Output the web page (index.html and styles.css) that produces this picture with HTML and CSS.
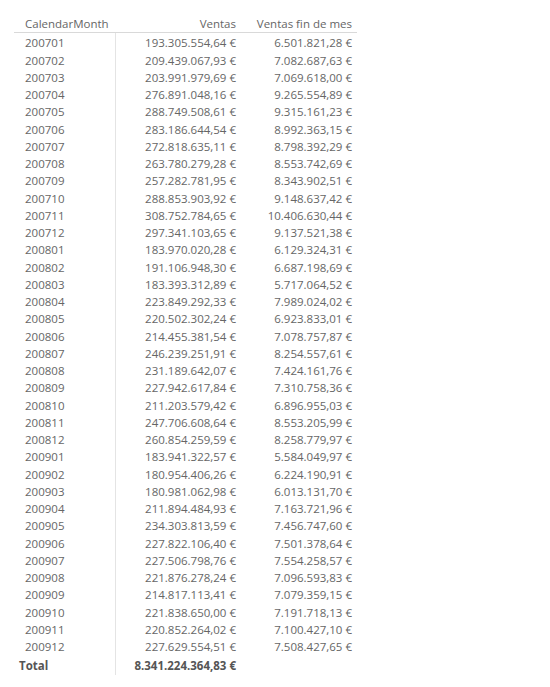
FILE: index.html
```html
<!DOCTYPE html>
<html lang="en">
<head>
    <meta charset="UTF-8">
    <title>Ventas por mes</title>
    <link rel="stylesheet" href="styles.css">
</head>
<body>
    <div class="visual">
        <table class="matrix">
            <colgroup>
                <col class="w-month">
                <col class="w-sales">
                <col class="w-eom">
            </colgroup>
            <thead>
                <tr>
                    <th class="col-month">CalendarMonth</th>
                    <th class="col-num">Ventas</th>
                    <th class="col-num">Ventas fin de mes</th>
                </tr>
            </thead>
            <tbody>
                <tr><td class="col-month">200701</td><td class="col-num">193.305.554,64 €</td><td class="col-num">6.501.821,28 €</td></tr>
                <tr><td class="col-month">200702</td><td class="col-num">209.439.067,93 €</td><td class="col-num">7.082.687,63 €</td></tr>
                <tr><td class="col-month">200703</td><td class="col-num">203.991.979,69 €</td><td class="col-num">7.069.618,00 €</td></tr>
                <tr><td class="col-month">200704</td><td class="col-num">276.891.048,16 €</td><td class="col-num">9.265.554,89 €</td></tr>
                <tr><td class="col-month">200705</td><td class="col-num">288.749.508,61 €</td><td class="col-num">9.315.161,23 €</td></tr>
                <tr><td class="col-month">200706</td><td class="col-num">283.186.644,54 €</td><td class="col-num">8.992.363,15 €</td></tr>
                <tr><td class="col-month">200707</td><td class="col-num">272.818.635,11 €</td><td class="col-num">8.798.392,29 €</td></tr>
                <tr><td class="col-month">200708</td><td class="col-num">263.780.279,28 €</td><td class="col-num">8.553.742,69 €</td></tr>
                <tr><td class="col-month">200709</td><td class="col-num">257.282.781,95 €</td><td class="col-num">8.343.902,51 €</td></tr>
                <tr><td class="col-month">200710</td><td class="col-num">288.853.903,92 €</td><td class="col-num">9.148.637,42 €</td></tr>
                <tr><td class="col-month">200711</td><td class="col-num">308.752.784,65 €</td><td class="col-num">10.406.630,44 €</td></tr>
                <tr><td class="col-month">200712</td><td class="col-num">297.341.103,65 €</td><td class="col-num">9.137.521,38 €</td></tr>
                <tr><td class="col-month">200801</td><td class="col-num">183.970.020,28 €</td><td class="col-num">6.129.324,31 €</td></tr>
                <tr><td class="col-month">200802</td><td class="col-num">191.106.948,30 €</td><td class="col-num">6.687.198,69 €</td></tr>
                <tr><td class="col-month">200803</td><td class="col-num">183.393.312,89 €</td><td class="col-num">5.717.064,52 €</td></tr>
                <tr><td class="col-month">200804</td><td class="col-num">223.849.292,33 €</td><td class="col-num">7.989.024,02 €</td></tr>
                <tr><td class="col-month">200805</td><td class="col-num">220.502.302,24 €</td><td class="col-num">6.923.833,01 €</td></tr>
                <tr><td class="col-month">200806</td><td class="col-num">214.455.381,54 €</td><td class="col-num">7.078.757,87 €</td></tr>
                <tr><td class="col-month">200807</td><td class="col-num">246.239.251,91 €</td><td class="col-num">8.254.557,61 €</td></tr>
                <tr><td class="col-month">200808</td><td class="col-num">231.189.642,07 €</td><td class="col-num">7.424.161,76 €</td></tr>
                <tr><td class="col-month">200809</td><td class="col-num">227.942.617,84 €</td><td class="col-num">7.310.758,36 €</td></tr>
                <tr><td class="col-month">200810</td><td class="col-num">211.203.579,42 €</td><td class="col-num">6.896.955,03 €</td></tr>
                <tr><td class="col-month">200811</td><td class="col-num">247.706.608,64 €</td><td class="col-num">8.553.205,99 €</td></tr>
                <tr><td class="col-month">200812</td><td class="col-num">260.854.259,59 €</td><td class="col-num">8.258.779,97 €</td></tr>
                <tr><td class="col-month">200901</td><td class="col-num">183.941.322,57 €</td><td class="col-num">5.584.049,97 €</td></tr>
                <tr><td class="col-month">200902</td><td class="col-num">180.954.406,26 €</td><td class="col-num">6.224.190,91 €</td></tr>
                <tr><td class="col-month">200903</td><td class="col-num">180.981.062,98 €</td><td class="col-num">6.013.131,70 €</td></tr>
                <tr><td class="col-month">200904</td><td class="col-num">211.894.484,93 €</td><td class="col-num">7.163.721,96 €</td></tr>
                <tr><td class="col-month">200905</td><td class="col-num">234.303.813,59 €</td><td class="col-num">7.456.747,60 €</td></tr>
                <tr><td class="col-month">200906</td><td class="col-num">227.822.106,40 €</td><td class="col-num">7.501.378,64 €</td></tr>
                <tr><td class="col-month">200907</td><td class="col-num">227.506.798,76 €</td><td class="col-num">7.554.258,57 €</td></tr>
                <tr><td class="col-month">200908</td><td class="col-num">221.876.278,24 €</td><td class="col-num">7.096.593,83 €</td></tr>
                <tr><td class="col-month">200909</td><td class="col-num">214.817.113,41 €</td><td class="col-num">7.079.359,15 €</td></tr>
                <tr><td class="col-month">200910</td><td class="col-num">221.838.650,00 €</td><td class="col-num">7.191.718,13 €</td></tr>
                <tr><td class="col-month">200911</td><td class="col-num">220.852.264,02 €</td><td class="col-num">7.100.427,10 €</td></tr>
                <tr><td class="col-month">200912</td><td class="col-num">227.629.554,51 €</td><td class="col-num">7.508.427,65 €</td></tr>
            </tbody>
            <tfoot>
                <tr class="total">
                    <td class="col-month">Total</td>
                    <td class="col-num">8.341.224.364,83 €</td>
                    <td class="col-num"></td>
                </tr>
            </tfoot>
        </table>
    </div>
</body>
</html>
```

FILE: styles.css
```css
body {
    margin: 0;
    background: #fff;
    font-family: "Open Sans", "Noto Sans", Arial, sans-serif;
    color: #666;
}
.visual {
    padding: 14px 0 0 14px;
}
.matrix {
    border-collapse: collapse;
    table-layout: fixed;
    width: 343px;
    font-size: 11.5px;
    line-height: 17.25px;
}
.w-month {
    width: 101px;
}
.w-sales {
    width: 126px;
}
.w-eom {
    width: 116px;
}
.matrix td,
.matrix th {
    padding: 0;
    white-space: nowrap;
}
.matrix th {
    font-weight: normal;
    color: #666;
    border-bottom: 1px solid #d9d9d9;
    padding-top: 1px;
}
.col-month {
    text-align: left;
    padding-left: 11px !important;
    border-right: 1px solid #e4e4e4;
}
.matrix th.col-month {
    border-right: none;
}
.col-num {
    text-align: right;
    padding-right: 5px !important;
}
.matrix tbody tr:first-child td {
    padding-top: 1px;
}
.total td {
    font-weight: bold;
    color: #555;
    padding-top: 2px;
}
.total .col-month {
    padding-left: 5px !important;
}
```
